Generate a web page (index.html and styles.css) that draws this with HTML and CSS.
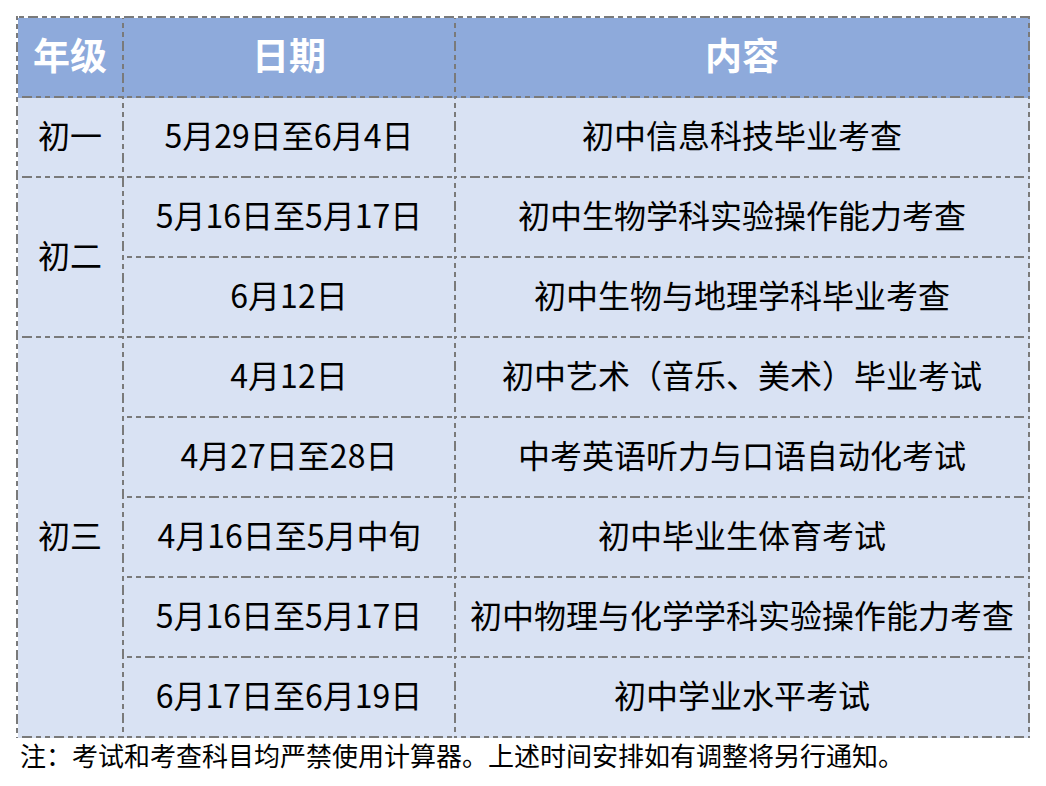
FILE: index.html
```html
<!DOCTYPE html>
<html lang="zh-CN">
<head>
<meta charset="utf-8">
<title>考试安排</title>
<link rel="stylesheet" href="styles.css">
</head>
<body>
<table class="schedule">
  <colgroup>
    <col class="c-grade">
    <col class="c-date">
    <col class="c-content">
  </colgroup>
  <thead>
    <tr class="head-row"><th>年级</th><th>日期</th><th>内容</th></tr>
  </thead>
  <tbody>
    <tr><td>初一</td><td>5月29日至6月4日</td><td>初中信息科技毕业考查</td></tr>
    <tr><td rowspan="2">初二</td><td>5月16日至5月17日</td><td>初中生物学科实验操作能力考查</td></tr>
    <tr><td>6月12日</td><td>初中生物与地理学科毕业考查</td></tr>
    <tr><td rowspan="5">初三</td><td>4月12日</td><td>初中艺术（音乐、美术）毕业考试</td></tr>
    <tr><td>4月27日至28日</td><td>中考英语听力与口语自动化考试</td></tr>
    <tr><td>4月16日至5月中旬</td><td>初中毕业生体育考试</td></tr>
    <tr><td>5月16日至5月17日</td><td>初中物理与化学学科实验操作能力考查</td></tr>
    <tr><td>6月17日至6月19日</td><td>初中学业水平考试</td></tr>
  </tbody>
</table>
<p class="note">注：考试和考查科目均严禁使用计算器。上述时间安排如有调整将另行通知。</p>
</body>
</html>
```
FILE: styles.css
```css
html, body {
  margin: 0;
  padding: 0;
  background: #ffffff;
}
body {
  font-family: "Noto Sans CJK SC", "Noto Sans", sans-serif;
  color: #000;
}
.schedule {
  margin: 16px 0 0 16px;
  border-collapse: separate;
  border-spacing: 0;
  table-layout: fixed;
  width: 1014px;
  border-style: solid;
  border-color: #7a7a7a;
  border-width: 2px 0 0 2px;
  border-image: url("data:image/svg+xml;utf8,<svg xmlns='http://www.w3.org/2000/svg' width='36' height='36' fill='%237a7a7a'><rect x='0' y='0' width='2' height='2'/><rect x='34' y='0' width='2' height='2'/><rect x='0' y='34' width='2' height='2'/><rect x='34' y='34' width='2' height='2'/><rect x='2' y='0' width='10' height='2'/><rect x='16' y='0' width='5' height='2'/><rect x='25' y='0' width='5' height='2'/><rect x='2' y='34' width='10' height='2'/><rect x='16' y='34' width='5' height='2'/><rect x='25' y='34' width='5' height='2'/><rect x='0' y='2' width='2' height='10'/><rect x='0' y='16' width='2' height='5'/><rect x='0' y='25' width='2' height='5'/><rect x='34' y='2' width='2' height='10'/><rect x='34' y='16' width='2' height='5'/><rect x='34' y='25' width='2' height='5'/></svg>") 2 repeat;
}
.c-grade { width: 106px; }
.c-date { width: 332px; }
.c-content { width: 574px; }
.schedule th,
.schedule td {
  border-style: solid;
  border-color: #7a7a7a;
  border-width: 0 2px 2px 0;
  border-image: url("data:image/svg+xml;utf8,<svg xmlns='http://www.w3.org/2000/svg' width='36' height='36' fill='%237a7a7a'><rect x='0' y='0' width='2' height='2'/><rect x='34' y='0' width='2' height='2'/><rect x='0' y='34' width='2' height='2'/><rect x='34' y='34' width='2' height='2'/><rect x='2' y='0' width='10' height='2'/><rect x='16' y='0' width='5' height='2'/><rect x='25' y='0' width='5' height='2'/><rect x='2' y='34' width='10' height='2'/><rect x='16' y='34' width='5' height='2'/><rect x='25' y='34' width='5' height='2'/><rect x='0' y='2' width='2' height='10'/><rect x='0' y='16' width='2' height='5'/><rect x='0' y='25' width='2' height='5'/><rect x='34' y='2' width='2' height='10'/><rect x='34' y='16' width='2' height='5'/><rect x='34' y='25' width='2' height='5'/></svg>") 2 repeat;
  padding: 0 0 6px 0;
  text-align: center;
  vertical-align: middle;
  white-space: nowrap;
  line-height: 1;
}
.schedule tr { height: 80px; }
.schedule .head-row { height: 80px; }
.schedule th {
  background: #8eaadb;
  color: #ffffff;
  font-size: 37px;
  font-weight: 700;
}
.schedule td {
  background: #d9e2f3;
  font-size: 32px;
  font-weight: 400;
}
.note {
  margin: 2px 0 0 20px;
  font-size: 26px;
  line-height: 30px;
}
```
